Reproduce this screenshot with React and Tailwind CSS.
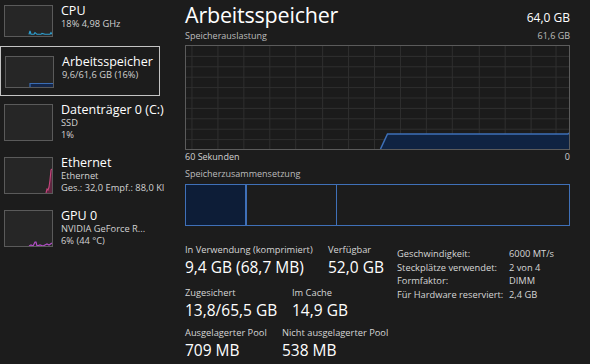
import React from 'react'

const font = "font-['Open_Sans',sans-serif]"

const Thumb = ({ tall, children }) => (
  <div className={`relative w-[49px] ${tall ? 'h-[37px]' : 'h-[32px]'} border border-[#5a5a5a] bg-[#262626] shrink-0`}>
    <svg className="absolute inset-0 w-full h-full" viewBox="0 0 47 35" preserveAspectRatio="none">
      {children}
    </svg>
  </div>
)

const SideItem = ({ title, lines, selected, tall, spark }) => (
  <div
    className={`flex items-start gap-[8px] pl-[4px] ${tall ? 'h-[53px] pt-[8px]' : 'h-[50px] pt-[9px]'} ${
      selected ? 'border border-[#c4c4c4] pl-[3px] pt-[8px]' : ''
    }`}
  >
    <Thumb tall={tall}>{spark}</Thumb>
    <div className="flex flex-col min-w-0 mt-[-2px]">
      <div className="text-[12.5px] leading-[15px] text-white whitespace-nowrap">{title}</div>
      {lines.map((l) => (
        <div key={l} className="text-[9.3px] leading-[12px] text-[#d2d2d2] whitespace-nowrap">
          {l}
        </div>
      ))}
    </div>
  </div>
)

const Sidebar = () => (
  <div className="w-[160px] shrink-0 flex flex-col mt-[-4px]">
    <SideItem
      title="CPU"
      lines={['18%  4,98 GHz']}
      spark={
        <polyline
          points="24,33 25,29 26,33 29,33 30,31 32,33 36,33 37,32 40,33 45,33 46,31 47,33"
          fill="none"
          stroke="#2d9fd1"
          strokeWidth="1.2"
        />
      }
    />
    <SideItem
      title="Arbeitsspeicher"
      lines={['9,6/61,6 GB (16%)']}
      selected
      spark={
        <>
          <rect x="24" y="31" width="23" height="4" fill="#13264a" />
          <polyline points="24,35 24,31 47,31" fill="none" stroke="#3b6db4" strokeWidth="1.2" />
        </>
      }
    />
    <SideItem title="Datenträger 0 (C:)" lines={['SSD', '1%']} tall spark={null} />
    <SideItem
      title="Ethernet"
      lines={['Ethernet', 'Ges.: 32,0  Empf.: 88,0 KI']}
      tall
      spark={
        <>
          <polygon points="41,35 42,31 43,32 44,29 45,22 46,12 47,11 47,35" fill="#5e2740" />
          <polyline points="41,35 42,31 43,32 44,29 45,22 46,12 47,11" fill="none" stroke="#c8457e" strokeWidth="1.1" />
        </>
      }
    />
    <SideItem
      title="GPU 0"
      lines={['NVIDIA GeForce R...', '6%  (44 °C)']}
      tall
      spark={
        <polyline
          points="24,35 26,34 28,35 30,31 31,31 32,35 35,34 38,35 42,33 44,34 47,32"
          fill="none"
          stroke="#b24ec7"
          strokeWidth="1.2"
        />
      }
    />
  </div>
)

const Chart = () => {
  const vlines = [6, 32, 58, 84, 110, 137, 163, 189, 215, 241, 267, 294, 320, 346, 371]
  const hlines = [10.4, 20.8, 31.2, 41.6, 52, 62.4, 72.8, 83.2, 93.6]
  return (
    <div className="relative h-[105px] border border-[#5b5b5b] bg-[#1b1b1b]">
      <svg className="absolute inset-0 w-full h-full" viewBox="0 0 384 103" preserveAspectRatio="none">
        {vlines.map((x) => (
          <line key={'v' + x} x1={x} y1="0" x2={x} y2="103" stroke="#2f2f2f" strokeWidth="1" />
        ))}
        {hlines.map((y) => (
          <line key={'h' + y} x1="0" y1={y} x2="384" y2={y} stroke="#2f2f2f" strokeWidth="1" />
        ))}
        <polygon points="195,103 202,88 383,88 384,87 384,103" fill="#0f2342" />
        <polyline points="195,103 202,88 383,88 384,87" fill="none" stroke="#3e70b8" strokeWidth="1.5" />
      </svg>
    </div>
  )
}

const Stat = ({ label, value, className = '' }) => (
  <div className={`flex flex-col shrink-0 ${className}`}>
    <div className="text-[9.3px] leading-[13px] text-[#d6d6d6] whitespace-nowrap">{label}</div>
    <div className="text-[15.5px] leading-[22px] text-white whitespace-nowrap">{value}</div>
  </div>
)

const Props = () => {
  const rows = [
    ['Geschwindigkeit:', '6000 MT/s'],
    ['Steckplätze verwendet:', '2 von 4'],
    ['Formfaktor:', 'DIMM'],
    ['Für Hardware reserviert:', '2,4 GB'],
  ]
  return (
    <div className="flex flex-col mt-[4px]">
      {rows.map(([k, v]) => (
        <div key={k} className="flex h-[13.7px] items-center text-[9.3px] text-[#d6d6d6] whitespace-nowrap">
          <div className="w-[112px]">{k}</div>
          <div>{v}</div>
        </div>
      ))}
    </div>
  )
}

export default function App() {
  return (
    <div className={`w-[590px] h-[364px] overflow-hidden bg-[#1c1c1c] flex ${font}`}>
      <Sidebar />
      <div className="flex-1 flex flex-col pl-[25px] pr-[20px] pt-[1px]">
        <div className="flex justify-between items-end h-[28px]">
          <div className="text-[21.5px] leading-[28px] text-white tracking-[-0.2px]">Arbeitsspeicher</div>
          <div className="text-[12px] leading-[16px] text-white mb-[3px]">64,0 GB</div>
        </div>
        <div className="flex justify-between text-[9px] leading-[12px] text-[#bdbdbd] mt-[1px] mb-[3px]">
          <span>Speicherauslastung</span>
          <span>61,6 GB</span>
        </div>
        <Chart />
        <div className="flex justify-between text-[9px] leading-[12px] text-[#d0d0d0] mt-[1px]">
          <span>60 Sekunden</span>
          <span>0</span>
        </div>
        <div className="text-[9px] leading-[12px] text-[#bdbdbd] mt-[5px] mb-[4px]">Speicherzusammensetzung</div>
        <div className="flex h-[42px] border border-[#3f70b8]">
          <div className="w-[59px] bg-[#0d1d37]" />
          <div className="w-[2px] border-l border-r border-[#3f70b8] bg-[#0d1d37]" />
          <div className="w-[90px] border-r border-[#3f70b8]" />
          <div className="flex-1" />
        </div>
        <div className="flex mt-[17px]">
          <div className="flex flex-col w-[212px] shrink-0">
            <div className="flex">
              <Stat label="In Verwendung (komprimiert)" value="9,4 GB (68,7 MB)" className="w-[143px]" />
              <Stat label="Verfügbar" value="52,0 GB" />
            </div>
            <div className="flex mt-[8px]">
              <Stat label="Zugesichert" value="13,8/65,5 GB" className="w-[107px]" />
              <Stat label="Im Cache" value="14,9 GB" />
            </div>
            <div className="flex mt-[5px]">
              <Stat label="Ausgelagerter Pool" value="709 MB" className="w-[97px]" />
              <Stat label="Nicht ausgelagerter Pool" value="538 MB" />
            </div>
          </div>
          <Props />
        </div>
      </div>
    </div>
  )
}
